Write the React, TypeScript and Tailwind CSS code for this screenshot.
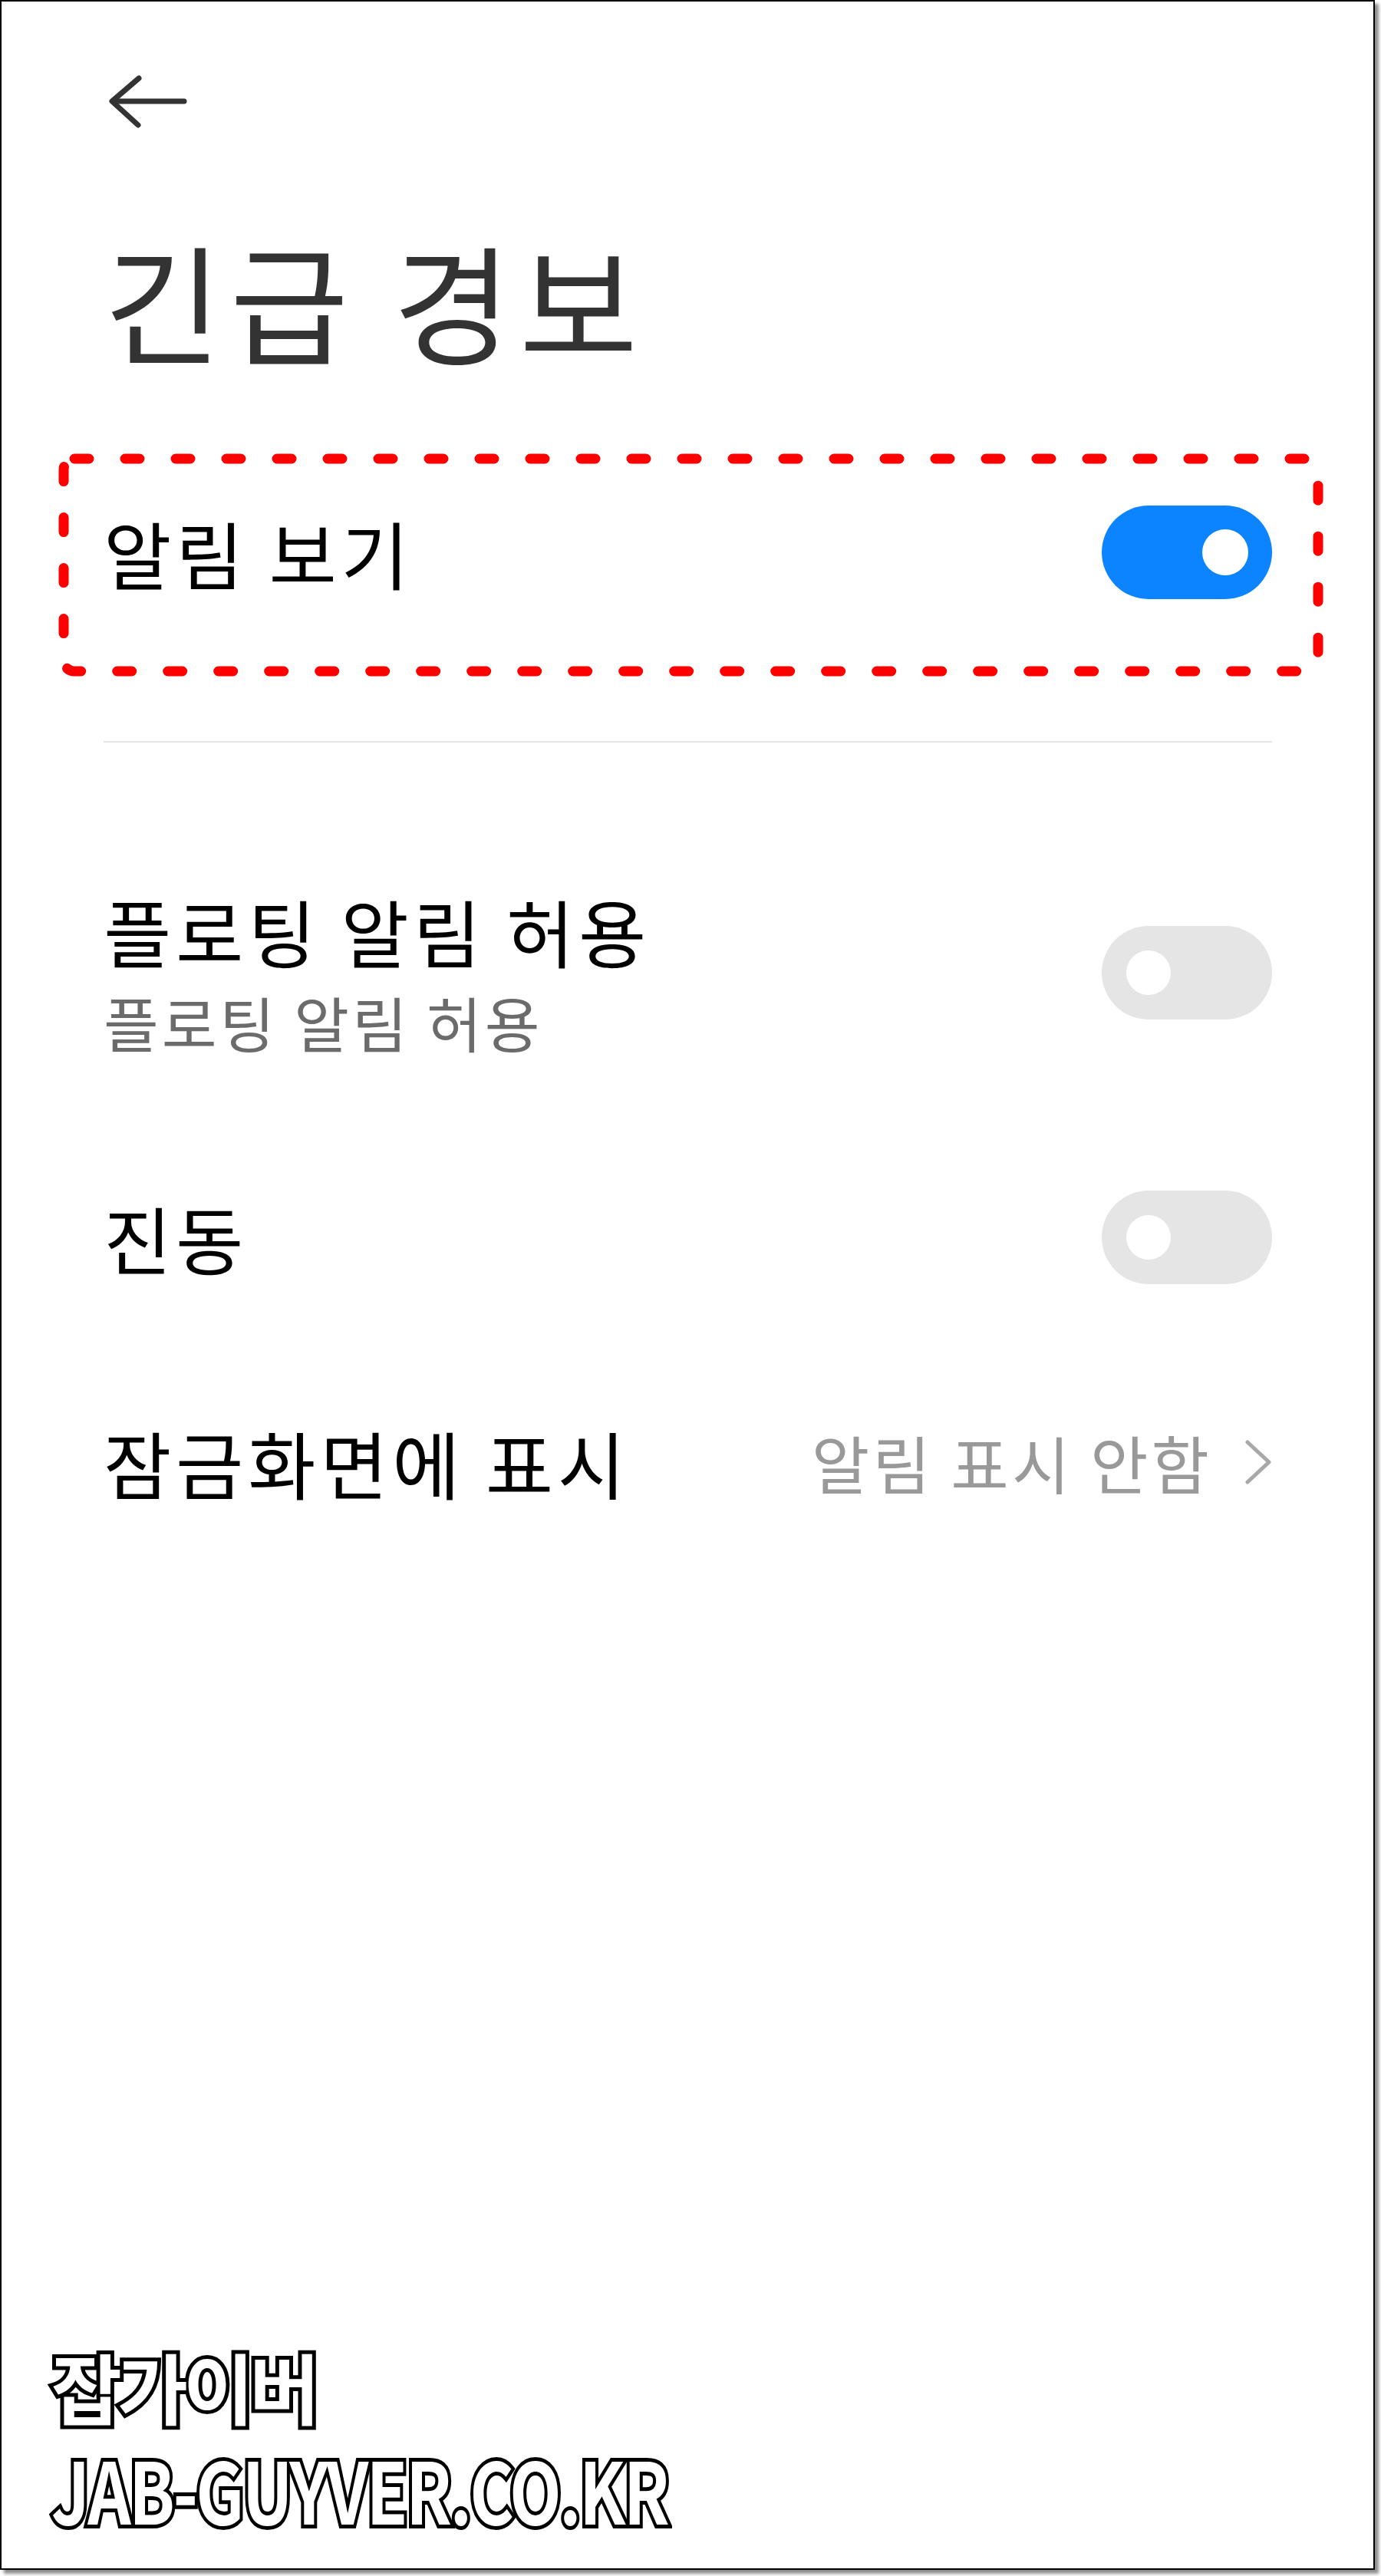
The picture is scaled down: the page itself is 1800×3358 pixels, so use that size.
import React from "react";

const Toggle = ({ on }: { on: boolean }) => {
  return (
    <div
      className={
        on
          ? "flex h-[122px] w-[222px] shrink-0 items-center justify-end rounded-full bg-[#0d84ff] pr-[31px]"
          : "flex h-[122px] w-[222px] shrink-0 items-center justify-start rounded-full bg-[#e5e5e5] pl-[32px]"
      }
    >
      <div className={on ? "h-[60px] w-[60px] rounded-full bg-white" : "h-[58px] w-[58px] rounded-full bg-white"} />
    </div>
  );
};

const App = () => {
  return (
    <div className="h-[3358px] w-[1800px] bg-white [font-family:'Noto_Sans_CJK_KR','Noto_Sans',sans-serif]">
      <div className="flex h-[3350px] w-[1792px] flex-col border-2 border-black bg-white pl-[133px] pr-[132px] pt-[94px] shadow-[5px_5px_4px_rgba(0,0,0,0.45)]">
        {/* back arrow */}
        <svg width="110" height="72" viewBox="135 96 110 72" fill="none" stroke="#333" strokeWidth="7" strokeLinecap="round" strokeLinejoin="round">
          <path d="M240 132H147" />
          <path d="M181 102L146 132L180 163" />
        </svg>

        <h1 className="mt-[138px] text-[168px] leading-none font-normal tracking-[0.06em] text-[#333]">긴급 경보</h1>

        {/* row: show alerts, marked with a red dashed box */}
        <div className="relative mt-[185px] flex h-[122px] items-center justify-between">
          <span className="text-[96px] leading-none tracking-[0.06em] text-black">알림 보기</span>
          <Toggle on />
          <svg className="pointer-events-none absolute left-[-62px] top-[-71px]" width="1655" height="297" fill="none">
            <rect x="10" y="10" width="1635" height="277" rx="14" stroke="#ff0000" strokeWidth="13" strokeDasharray="19 47" strokeLinecap="round" />
          </svg>
        </div>

        <div className="mt-[185px] h-[2px] bg-[#e6e6e6]" />

        <div className="mt-[180px] flex h-[240px] items-center justify-between">
          <div className="flex flex-col">
            <span className="text-[96px] leading-none tracking-[0.06em] text-black">플로팅 알림 허용</span>
            <span className="mt-[32px] text-[78px] leading-none tracking-[0.05em] text-[#6b6b6b]">플로팅 알림 허용</span>
          </div>
          <Toggle on={false} />
        </div>

        <div className="mt-[164px] flex h-[122px] items-center justify-between">
          <span className="text-[96px] leading-none tracking-[0.06em] text-black">진동</span>
          <Toggle on={false} />
        </div>

        <div className="mt-[171px] flex h-[122px] items-center justify-between">
          <span className="text-[96px] leading-none tracking-[0.06em] text-black">잠금화면에 표시</span>
          <div className="flex items-center gap-[42px]">
            <span className="text-[82px] leading-none tracking-[0.05em] text-[#999]">알림 표시 안함</span>
            <svg width="36" height="58" viewBox="0 0 36 58" fill="none" stroke="#a8a8a8" strokeWidth="5" strokeLinecap="round" strokeLinejoin="round">
              <path d="M4 3L32 29L4 55" />
            </svg>
          </div>
        </div>

        {/* watermark */}
        <div className="-ml-[68px] mt-auto mb-[50px] flex flex-col items-start font-bold leading-none text-white [-webkit-text-stroke:10px_#000] [paint-order:stroke_fill]">
          <span className="text-[100px] tracking-[-0.06em]">잡가이버</span>
          <span className="mt-[28px] origin-left scale-x-80 text-[110px] tracking-[-0.03em]">JAB-GUYVER.CO.KR</span>
        </div>
      </div>
    </div>
  );
};

export default App;
